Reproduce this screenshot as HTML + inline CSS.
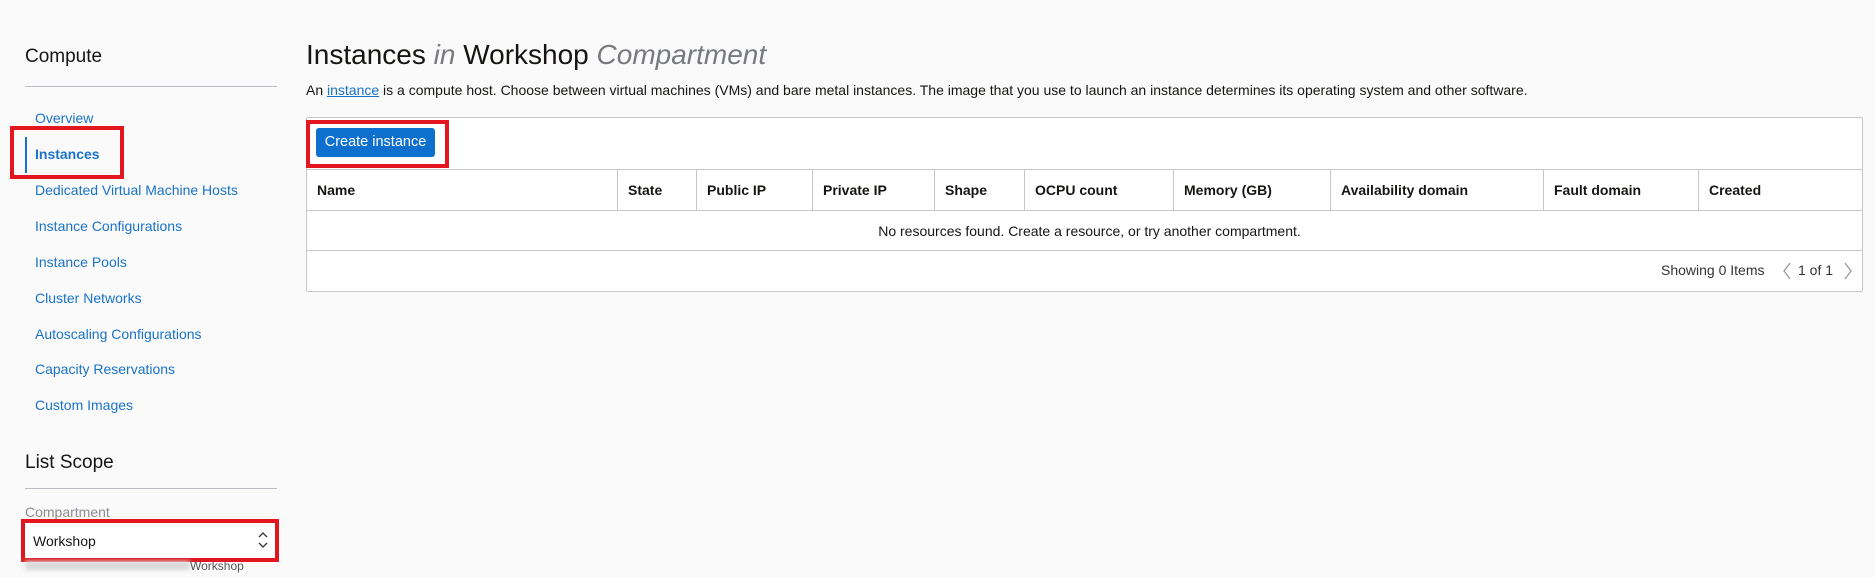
<!DOCTYPE html>
<html><head><meta charset="utf-8"><style>
*{box-sizing:border-box;margin:0;padding:0}
body{width:1875px;height:577px;background:#fafafa;font-family:"Liberation Sans",Arial,sans-serif;position:relative;overflow:hidden;color:#161513}
.a{position:absolute;white-space:nowrap}
.h{font-size:19px;color:#161513}
.ln{position:absolute;height:1px;background:#b9bec6}
.nav{font-size:14px;color:#1a73c8}
.red{position:absolute;border:4px solid #e3161f}
table{border-collapse:collapse;position:absolute;left:306px;top:169px;width:1557px;font-size:14px}
td,th{border:1px solid #c4c7cc;height:41px;text-align:left;padding-left:10px;font-weight:bold}
</style></head><body>
<div class="a h" style="left:25px;top:46px">Compute</div>
<div class="ln" style="left:25px;top:86px;width:252px"></div>
<div class="a nav" style="left:35px;top:110px">Overview</div>
<div class="a" style="left:25px;top:137px;width:2px;height:36px;background:#1a73c8"></div>
<div class="a nav" style="left:35px;top:146px;font-weight:bold">Instances</div>
<div class="red" style="left:10px;top:126px;width:114px;height:53px"></div>
<div class="a nav" style="left:35px;top:182px">Dedicated Virtual Machine Hosts</div>
<div class="a nav" style="left:35px;top:218px">Instance Configurations</div>
<div class="a nav" style="left:35px;top:254px">Instance Pools</div>
<div class="a nav" style="left:35px;top:290px">Cluster Networks</div>
<div class="a nav" style="left:35px;top:326px">Autoscaling Configurations</div>
<div class="a nav" style="left:35px;top:361px">Capacity Reservations</div>
<div class="a nav" style="left:35px;top:397px">Custom Images</div>
<div class="a h" style="left:25px;top:452px">List Scope</div>
<div class="ln" style="left:25px;top:488px;width:252px"></div>
<div class="a" style="left:25px;top:504px;font-size:14px;color:#8a8d91">Compartment</div>
<div class="a" style="left:22px;top:523px;width:254px;height:35px;background:#fff"></div>
<div class="a" style="left:33px;top:533px;font-size:14px">Workshop</div>
<svg class="a" style="left:258px;top:531px" width="10" height="18" viewBox="0 0 10 18"><path d="M1 6L5 2L9 6M1 12L5 16L9 12" fill="none" stroke="#333" stroke-width="1.3"/></svg>
<div class="red" style="left:21px;top:519px;width:258px;height:43px"></div>
<div class="a" style="left:25px;top:561px;width:165px;height:9px;background:#d8d9db;filter:blur(2px)"></div>
<div class="a" style="left:190px;top:559px;font-size:12px;color:#555">Workshop</div>

<div class="a" style="left:306px;top:39px;font-size:28px">Instances <i style="color:#77797c">in</i> Workshop <i style="color:#77797c">Compartment</i></div>
<div class="a" style="left:306px;top:82px;font-size:14px">An <span style="color:#1a73c8;text-decoration:underline">instance</span> is a compute host. Choose between virtual machines (VMs) and bare metal instances. The image that you use to launch an instance determines its operating system and other software.</div>
<div class="a" style="left:306px;top:117px;width:1557px;height:175px;background:#fff;border:1px solid #c4c7cc;border-radius:2px"></div>
<div class="a" style="left:316px;top:128px;width:119px;height:29px;background:#0d6fce;border-radius:3px;color:#fff;font-size:14.5px;text-align:center;line-height:29px">Create instance</div>
<div class="red" style="left:306px;top:120px;width:143px;height:48px"></div>
<table>
<tr><th style="width:311px">Name</th><th style="width:79px">State</th><th style="width:116px">Public IP</th><th style="width:122px">Private IP</th><th style="width:90px">Shape</th><th style="width:149px">OCPU count</th><th style="width:157px">Memory (GB)</th><th style="width:213px">Availability domain</th><th style="width:155px">Fault domain</th><th>Created</th></tr>
<tr><td colspan="10" style="text-align:center;font-weight:normal;height:40px">No resources found. Create a resource, or try another compartment.</td></tr>
</table>
<div class="a" style="left:1661px;top:262px;font-size:14px;color:#333">Showing 0 Items</div>
<svg class="a" style="left:1782px;top:262px" width="10" height="18" viewBox="0 0 10 18"><path d="M8 1L2 9L8 17" fill="none" stroke="#999" stroke-width="1.3"/></svg>
<div class="a" style="left:1798px;top:262px;font-size:14px;color:#333">1 of 1</div>
<svg class="a" style="left:1843px;top:262px" width="10" height="18" viewBox="0 0 10 18"><path d="M2 1L8 9L2 17" fill="none" stroke="#999" stroke-width="1.3"/></svg>
</body></html>
